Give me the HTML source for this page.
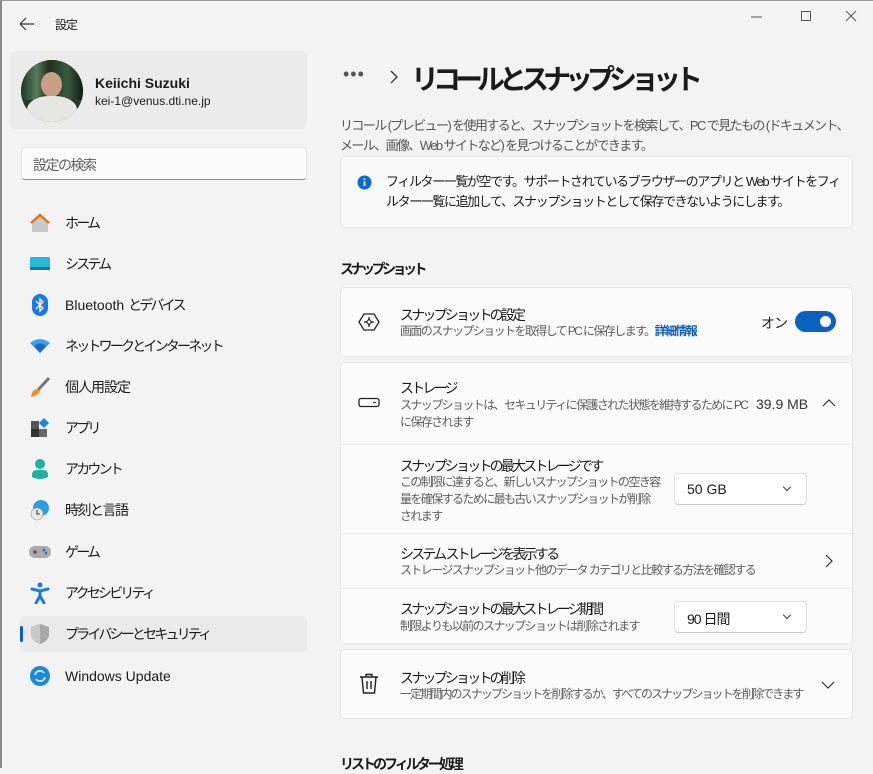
<!DOCTYPE html>
<html><head><meta charset="utf-8"><style>
*{box-sizing:border-box;margin:0;padding:0}
body{width:873px;height:768px;overflow:hidden;background:#f3f3f3;font-family:"Liberation Sans","Noto Sans CJK JP",sans-serif;color:#1b1b1b;position:relative}
.a{position:absolute;white-space:nowrap}
.k{letter-spacing:-2.8px}
.nav{position:absolute;left:20px;width:287px;height:37px;display:flex;align-items:center;font-size:14px;white-space:nowrap}
.nav .ic{width:22px;height:22px;margin-left:9px;margin-right:14px;display:flex;align-items:center;justify-content:center}
.card{position:absolute;left:340px;width:513px;background:#fbfbfb;border:1px solid #e5e5e5;border-radius:5px}
.t{font-size:14px;color:#1b1b1b;letter-spacing:-2.8px}
.s{font-size:12px;color:#5d5d5d;line-height:17px;letter-spacing:-1.6px}
.dd{position:absolute;left:674px;width:133px;height:32px;background:#fff;border:1px solid #e0e0e0;border-bottom-color:#c8c8c8;border-radius:4px;font-size:14px;padding:7px 12px}
.dd:after{content:"";position:absolute;right:16px;top:10px;width:5px;height:5px;border-right:1px solid #444;border-bottom:1px solid #444;transform:rotate(45deg)}
.sep{position:absolute;left:341px;width:511px;height:1px;background:#e8e8e8}
</style></head><body>
<div class="a" style="left:0;top:0;width:2px;height:768px;background:#8a8a8a"></div>
<div class="a" style="left:0;top:0;width:873px;height:1px;background:#9a9a9a"></div>
<svg class="a" style="left:18px;top:16px" width="18" height="16"><path d="M2 8H16M2 8L8 2M2 8L8 14" stroke="#333" stroke-width="1.2" fill="none"/></svg>
<div class="a" style="left:55px;top:16px;font-size:12px;letter-spacing:-1px">設定</div>
<svg class="a" style="left:750px;top:10px" width="110" height="16"><path d="M1 7H12" stroke="#555"/><rect x="51.5" y="1.5" width="9" height="9" fill="none" stroke="#555"/><path d="M96 1L106 11M106 1L96 11" stroke="#555"/></svg>
<div class="a" style="left:10px;top:51px;width:297px;height:78px;background:#ebebeb;border-radius:6px"></div>
<div class="a" style="left:21px;top:60px;width:62px;height:62px;border-radius:50%;background:#2a3a2a;overflow:hidden"><div style="position:absolute;left:0;top:0;width:62px;height:40px;background:linear-gradient(90deg,#1a3a2a,#5a7a5a 25%,#203020 45%,#3a5a40 75%,#101a10)"></div><div style="position:absolute;left:20px;top:12px;width:21px;height:25px;border-radius:50%;background:#c8a088"></div><div style="position:absolute;left:6px;top:36px;width:50px;height:30px;border-radius:45% 45% 0 0;background:#e6e6e2"></div></div>
<div class="a" style="left:95px;top:75px;font-size:14px;font-weight:bold">Keiichi Suzuki</div>
<div class="a" style="left:95px;top:94px;font-size:12px">kei-1@venus.dti.ne.jp</div>
<div class="a" style="left:21px;top:147px;width:286px;height:33px;background:#fbfbfb;border:1px solid #e3e3e3;border-bottom:1px solid #8a8a8a;border-radius:4px;font-size:14px;color:#5f5f5f;padding:7px 11px;letter-spacing:-1.5px">設定の検索</div>

<div class="nav" style="top:204px"><span class="ic"><svg width="22" height="20"><path d="M3 9L11 2L19 9V19H3Z" fill="#c8c8c8"/><path d="M2 10L11 2L20 10" stroke="#e87020" stroke-width="2.5" fill="none"/></svg></span><span class="k">ホーム</span></div>
<div class="nav" style="top:245px"><span class="ic"><svg width="22" height="16"><rect x="1" y="1" width="20" height="13" rx="1.5" fill="#2bb5d8"/><rect x="1" y="11" width="20" height="3" fill="#1477a8"/></svg></span><span class="k">システム</span></div>
<div class="nav" style="top:286px"><span class="ic"><svg width="16" height="22"><rect x="0" y="0" width="16" height="22" rx="8" fill="#1a7ae0"/><path d="M4 7L11 14L8 17V5L11 8L4 15" stroke="#fff" stroke-width="1.3" fill="none"/></svg></span>Bluetooth&nbsp;<span class="k">とデバイス</span></div>
<div class="nav" style="top:327px"><span class="ic"><svg width="22" height="18"><path d="M1 6Q11 -2 21 6L11 16Z" fill="#3aa0f0"/><path d="M5 9Q11 4 17 9L11 16Z" fill="#1a6ac0"/></svg></span><span class="k">ネットワークとインターネット</span></div>
<div class="nav" style="top:368px"><span class="ic"><svg width="22" height="22"><path d="M20 2L9 14" stroke="#777" stroke-width="3"/><path d="M9 13Q3 13 2 21Q9 20 11 15Z" fill="#f09020"/></svg></span><span style="letter-spacing:-1px">個人用設定</span></div>
<div class="nav" style="top:409px"><span class="ic"><svg width="20" height="20"><rect x="1" y="3" width="8" height="8" fill="#555"/><rect x="1" y="11" width="8" height="8" fill="#333"/><rect x="9" y="11" width="8" height="8" fill="#666"/><path d="M14 0L19 5L14 10L9 5Z" fill="#1a8ae0"/></svg></span><span class="k">アプリ</span></div>
<div class="nav" style="top:450px"><span class="ic"><svg width="18" height="22"><circle cx="9" cy="6" r="5" fill="#20b0a0"/><path d="M1 17Q1 12 6 12H12Q17 12 17 17V19Q9 23 1 19Z" fill="#20b0a0"/></svg></span><span class="k">アカウント</span></div>
<div class="nav" style="top:491px"><span class="ic"><svg width="22" height="22"><circle cx="12" cy="9" r="8" fill="#2aa0e0"/><circle cx="8" cy="15" r="6" fill="#e8e8e8" stroke="#999" stroke-width=".6"/><path d="M8 11V15H11" stroke="#333" fill="none"/></svg></span><span style="letter-spacing:-1.5px">時刻と言語</span></div>
<div class="nav" style="top:533px"><span class="ic"><svg width="22" height="14"><rect x="0" y="1" width="22" height="12" rx="6" fill="#aaa"/><path d="M4 7H8M6 5V9" stroke="#333"/><circle cx="15" cy="5" r="1.3" fill="#1a6ae0"/><circle cx="17" cy="8" r="1.3" fill="#1a6ae0"/></svg></span><span class="k">ゲーム</span></div>
<div class="nav" style="top:574px"><span class="ic"><svg width="20" height="22"><circle cx="10" cy="3" r="2.5" fill="#1a7ad8"/><path d="M2 7L10 9L18 7M10 9V14L6 21M10 14L14 21" stroke="#1a7ad8" stroke-width="3" fill="none" stroke-linecap="round"/></svg></span><span class="k">アクセシビリティ</span></div>
<div class="a" style="left:20px;top:616px;width:287px;height:36px;background:#eaeaea;border-radius:5px"></div>
<div class="a" style="left:20px;top:626px;width:3px;height:16px;background:#0a5cc0;border-radius:2px"></div>
<div class="nav" style="top:615px"><span class="ic"><svg width="20" height="22"><path d="M10 1L19 4V11Q19 18 10 21Q1 18 1 11V4Z" fill="#a8a8a8"/><path d="M10 1V21Q1 18 1 11V4Z" fill="#c8c8c8"/></svg></span><span class="k">プライバシーとセキュリティ</span></div>
<div class="nav" style="top:657px"><span class="ic"><svg width="22" height="22"><circle cx="11" cy="11" r="10" fill="#1a8ae0"/><path d="M6 10A5 5 0 0 1 15 8M16 12A5 5 0 0 1 7 14" stroke="#fff" stroke-width="1.5" fill="none"/></svg></span>Windows Update</div>

<div class="a" style="left:343px;top:64px;font-size:18px;color:#555;letter-spacing:1px">•••</div>
<svg class="a" style="left:389px;top:70px" width="10" height="14"><path d="M2 1L8 7L2 13" stroke="#333" stroke-width="1.3" fill="none"/></svg>
<div class="a" style="left:411px;top:58px;font-size:28px;font-weight:bold;letter-spacing:-6px">リコールとスナップショット</div>
<div class="a" style="left:340px;top:116px;font-size:13px;color:#555;line-height:20px;letter-spacing:-1.6px">リコール (プレビュー) を使用すると、スナップショットを検索して、PC で見たもの (ドキュメント、<br>メール、画像、Web サイトなど) を見つけることができます。</div>
<div class="card" style="top:156px;height:72px;background:#f9f9f9"></div>
<svg class="a" style="left:357px;top:175px" width="15" height="15"><circle cx="7.5" cy="7.5" r="7" fill="#0a6cd0"/><path d="M7.5 6.5V11" stroke="#fff" stroke-width="1.6"/><circle cx="7.5" cy="4.3" r="1" fill="#fff"/></svg>
<div class="a" style="left:386px;top:172px;font-size:13px;line-height:20px;letter-spacing:-1.4px">フィルター一覧が空です。サポートされているブラウザーのアプリと Web サイトをフィ<br>ルター一覧に追加して、スナップショットとして保存できないようにします。</div>
<div class="a" style="left:340px;top:259px;font-size:14px;font-weight:bold;letter-spacing:-3.5px">スナップショット</div>

<div class="card" style="top:287px;height:70px"></div>
<svg class="a" style="left:358px;top:312px" width="22" height="20"><path d="M6 2H16L21 10L16 18H6L1 10Z" stroke="#222" stroke-width="1.3" fill="none"/><path d="M11 5Q11 10 6 10Q11 10 11 15Q11 10 16 10Q11 10 11 5Z" stroke="#222" fill="none"/></svg>
<div class="a t" style="left:400px;top:305px">スナップショットの設定</div>
<div class="a s" style="left:400px;top:323px">画面のスナップショットを取得して PC に保存します。<span style="color:#0a5cb8;font-weight:bold">詳細情報</span></div>
<div class="a t" style="left:761px;top:313px;letter-spacing:-1px">オン</div>
<div class="a" style="left:795px;top:311px;width:41px;height:21px;border-radius:11px;background:#0a62c0"><div style="position:absolute;right:5px;top:5px;width:11px;height:11px;border-radius:50%;background:#fff"></div></div>

<div class="card" style="top:362px;height:282px"></div>
<svg class="a" style="left:358px;top:397px" width="22" height="12"><rect x="1" y="1.5" width="20" height="8" rx="2" stroke="#222" stroke-width="1.3" fill="none"/><path d="M15 5.5H18" stroke="#222"/></svg>
<div class="a t" style="left:400px;top:378px">ストレージ</div>
<div class="a s" style="left:400px;top:397px">スナップショットは、セキュリティに保護された状態を維持するために PC<br>に保存されます</div>
<div class="a t" style="left:756px;top:396px;color:#333;letter-spacing:0">39.9 MB</div>
<svg class="a" style="left:822px;top:398px" width="14" height="10"><path d="M1 8L7 2L13 8" stroke="#333" stroke-width="1.2" fill="none"/></svg>
<div class="sep" style="top:444px"></div>
<div class="a t" style="left:400px;top:456px">スナップショットの最大ストレージです</div>
<div class="a s" style="left:400px;top:474px">この制限に達すると、新しいスナップショットの空き容<br>量を確保するために最も古いスナップショットが削除<br>されます</div>
<div class="dd" style="top:473px">50 GB</div>
<div class="sep" style="top:533px"></div>
<div class="a t" style="left:400px;top:544px">システム ストレージを表示する</div>
<div class="a s" style="left:400px;top:562px">ストレージスナップショット他のデータ カテゴリと比較する方法を確認する</div>
<svg class="a" style="left:824px;top:554px" width="10" height="14"><path d="M2 1L8 7L2 13" stroke="#333" stroke-width="1.2" fill="none"/></svg>
<div class="sep" style="top:588px"></div>
<div class="a t" style="left:400px;top:599px">スナップショットの最大ストレージ期間</div>
<div class="a s" style="left:400px;top:618px">制限よりも以前のスナップショットは削除されます</div>
<div class="dd" style="top:601px;letter-spacing:-1px">90 日間</div>

<div class="card" style="top:649px;height:70px"></div>
<svg class="a" style="left:359px;top:673px" width="20" height="22"><path d="M1 4H19M7 4V1.5H13V4M3 4L4.5 20H15.5L17 4M8 8V16M12 8V16" stroke="#222" stroke-width="1.4" fill="none"/></svg>
<div class="a t" style="left:400px;top:668px">スナップショットの削除</div>
<div class="a s" style="left:400px;top:686px;letter-spacing:-1.9px">一定期間内のスナップショットを削除するか、すべてのスナップショットを削除できます</div>
<svg class="a" style="left:821px;top:680px" width="14" height="10"><path d="M1 2L7 8L13 2" stroke="#333" stroke-width="1.2" fill="none"/></svg>
<div class="a" style="left:340px;top:754px;font-size:14px;font-weight:bold;letter-spacing:-3px">リストのフィルター処理</div>
</body></html>
